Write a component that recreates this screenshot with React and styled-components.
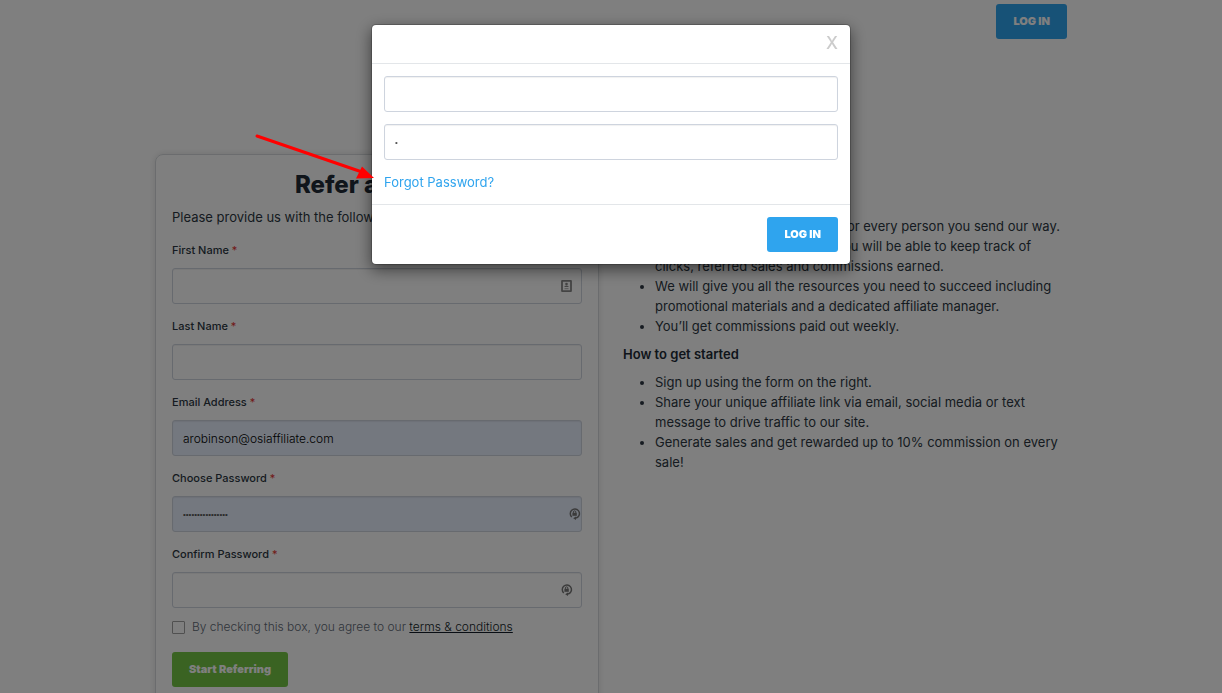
import { useState } from "react";
import styled, { createGlobalStyle } from "styled-components";

const GlobalStyle = createGlobalStyle`
  *, *::before, *::after {
    box-sizing: border-box;
  }

  body {
    margin: 0;
    background: #fff;
    color: #2c3742;
    font-family: Inter, "Open Sans", sans-serif;
    font-size: 13px;
    font-weight: 400;
    line-height: 20px;
    overflow: hidden;
  }

  input, button {
    font-family: inherit;
  }
`;

const Container = styled.div`
  max-width: 944px;
  margin: 0 auto;
  padding: 0 16px;
`;

const Header = styled.header`
  display: flex;
  justify-content: flex-end;
  padding: 4px 0;
  margin-bottom: 111px;
`;

const Button = styled.button`
  padding: 10px 17px;
  border: 0;
  border-radius: 3px;
  background: ${({ $green }) => ($green ? "#74c644" : "#2fa4ee")};
  color: #fff;
  font-size: 11px;
  font-weight: 900;
  line-height: 15px;
  cursor: pointer;
`;

const Columns = styled.main`
  display: grid;
  grid-template-columns: 1fr 1fr;
  gap: 24px;
`;

const Card = styled.section`
  padding: 16px;
  border: 1px solid #d6d9dc;
  border-radius: 8px;
  box-shadow: 0 0 6px rgba(0, 0, 0, 0.12);

  h1 {
    margin: 0 0 8px;
    color: #212b36;
    font-size: 24px;
    font-weight: 800;
    line-height: 28px;
    text-align: center;
  }

  p {
    margin: 0 0 13px;
  }
`;

const Field = styled.div`
  margin-bottom: 12px;

  label {
    display: block;
    margin-bottom: 8px;
    font-size: 11px;
    font-weight: 500;
  }

  label span {
    color: #e3342f;
    font-weight: 400;
  }
`;

const InputWrap = styled.div`
  position: relative;

  svg {
    position: absolute;
    top: 12px;
    right: ${({ $edge }) => ($edge ? "1px" : "9px")};
  }
`;

const Input = styled.input`
  display: block;
  width: 100%;
  height: 36px;
  padding: 0 10px;
  border: 1px solid #ced4de;
  border-radius: 3px;
  background: ${({ $filled }) => ($filled ? "#e8f0fe" : "#fff")};
  box-shadow: inset 0 1px 1px rgba(0, 0, 0, 0.06);
  color: #000;
  font-size: 12px;
  font-weight: 300;
  outline: 0;

  &[type="password"] {
    color: #555;
    font-family: "Liberation Sans", sans-serif;
    font-size: 8px;
  }
`;

const Terms = styled.div`
  display: flex;
  align-items: center;
  gap: 7px;
  margin-bottom: 18px;
  color: #5f6a76;
  font-size: 12px;
  font-weight: 300;
  line-height: 14px;

  input {
    appearance: none;
    width: 13px;
    height: 13px;
    margin: 0;
    border: 1px solid #a0a0a0;
    border-radius: 1px;
  }

  a {
    color: #111b26;
  }
`;

const Info = styled.section`
  padding-top: 34px;

  h2 {
    margin: 0 0 8px;
    color: #212b36;
    font-size: 13px;
    font-weight: 600;
    line-height: 20px;
  }

  ul {
    margin: 0 0 8px;
    padding-left: 32px;
  }
`;

const Backdrop = styled.div`
  position: fixed;
  inset: 0;
  display: flex;
  justify-content: center;
  align-items: flex-start;
  padding: 24px 16px;
  background: rgba(0, 0, 0, 0.5);
`;

const Modal = styled.div`
  position: relative;
  width: 100%;
  max-width: 480px;
  border: 1px solid rgba(0, 0, 0, 0.2);
  border-radius: 5px;
  background: #fff;
  background-clip: padding-box;
  box-shadow: 0 5px 15px rgba(0, 0, 0, 0.5);
`;

const ModalHeader = styled.div`
  display: flex;
  justify-content: flex-end;
  padding: 8px 12px 10px;
  border-bottom: 1px solid #e3e6e9;
`;

const CloseButton = styled.button`
  padding: 0;
  border: 0;
  background: none;
  color: #ccc;
  font-size: 17px;
  font-weight: 500;
  line-height: 20px;
  cursor: pointer;
`;

const ModalBody = styled.div`
  display: flex;
  flex-direction: column;
  align-items: flex-start;
  gap: 12px;
  padding: 12px;

  a {
    color: #2fa4ee;
    text-decoration: none;
  }
`;

const ModalFooter = styled.div`
  display: flex;
  justify-content: flex-end;
  padding: 12px;
  border-top: 1px solid #e3e6e9;
`;

const Arrow = styled.svg`
  position: absolute;
  top: 108px;
  left: -118px;
  pointer-events: none;
`;

const ContactIcon = () => (
  <svg width="12" height="12" viewBox="0 0 12 12" fill="none">
    <rect x="1" y="0.75" width="9" height="10.5" rx="0.5" stroke="#888" strokeWidth="1.8" />
    <circle cx="5.5" cy="4" r="1.3" fill="#888" />
    <path d="M3.5 7V6.2Q5.5 4.6 7.5 6.2V7z" fill="#888" />
    <path d="M3.5 8.7h4" stroke="#aaa" />
  </svg>
);

const LockIcon = () => (
  <svg width="12" height="12" viewBox="0 0 12 12" fill="none">
    <path d="M2.8 9A4.6 4.6 0 1 1 8.6 9.3L6 10.4" stroke="#777" strokeWidth="1.5" />
    <path d="M4.2 10.3L7 8.4V12z" fill="#777" />
    <rect x="3.4" y="4.8" width="4.4" height="3" fill="#777" />
    <path d="M4.4 5V4a1.2 1.2 0 0 1 2.4 0v1" stroke="#777" />
  </svg>
);

const fields = [
  { id: "first", label: "First Name", type: "text", icon: <ContactIcon /> },
  { id: "last", label: "Last Name", type: "text" },
  { id: "email", label: "Email Address", type: "email", value: "arobinson@osiaffiliate.com" },
  { id: "password", label: "Choose Password", type: "password", value: "referafriend2020", icon: <LockIcon />, edge: true },
  { id: "confirm", label: "Confirm Password", type: "password", icon: <LockIcon /> },
];

const LoginModal = ({ onClose }) => (
  <Backdrop>
    <Modal role="dialog" aria-modal="true" aria-label="Log in">
      <ModalHeader>
        <CloseButton type="button" aria-label="Close" onClick={onClose}>
          X
        </CloseButton>
      </ModalHeader>
      <ModalBody>
        <Input type="text" aria-label="Email" />
        <Input type="password" aria-label="Password" defaultValue="a" />
        <a href="#forgot">Forgot Password?</a>
      </ModalBody>
      <ModalFooter>
        <Button type="button">LOG IN</Button>
      </ModalFooter>
      <Arrow width="124" height="50" viewBox="0 0 124 50">
        <path d="M3 3L108 39" stroke="#f00" strokeWidth="3" strokeLinecap="round" />
        <path d="M120 45L102 45.5L108 33.5z" fill="#f00" />
      </Arrow>
    </Modal>
  </Backdrop>
);

const App = () => {
  const [open, setOpen] = useState(true);

  return (
    <>
      <GlobalStyle />
      <Container>
        <Header>
          <Button type="button" onClick={() => setOpen(true)}>
            LOG IN
          </Button>
        </Header>

        <Columns>
          <Card>
            <h1>Refer a Friend</h1>
            <p>Please provide us with the following information.</p>
            <form>
              {fields.map(({ id, label, type, value, icon, edge }) => (
                <Field key={id}>
                  <label htmlFor={id}>
                    {label} <span>*</span>
                  </label>
                  <InputWrap $edge={edge}>
                    <Input id={id} type={type} defaultValue={value} $filled={!!value} />
                    {icon}
                  </InputWrap>
                </Field>
              ))}
              <Terms>
                <input type="checkbox" id="terms" />
                <label htmlFor="terms">
                  By checking this box, you agree to our <a href="#terms">terms &amp; conditions</a>
                </label>
              </Terms>
              <Button type="button" $green>
                Start Referring
              </Button>
            </form>
          </Card>

          <Info>
            <h2>Why join our program</h2>
            <ul>
              <li>You will receive a commission for every person you send our way.</li>
              <li>
                Get your own account where you will be able to keep track of clicks, referred sales
                and commissions earned.
              </li>
              <li>
                We will give you all the resources you need to succeed including promotional
                materials and a dedicated affiliate manager.
              </li>
              <li>You’ll get commissions paid out weekly.</li>
            </ul>
            <h2>How to get started</h2>
            <ul>
              <li>Sign up using the form on the right.</li>
              <li>
                Share your unique affiliate link via email, social media or text message to drive
                traffic to our site.
              </li>
              <li>Generate sales and get rewarded up to 10% commission on every sale!</li>
            </ul>
          </Info>
        </Columns>
      </Container>
      {open && <LoginModal onClose={() => setOpen(false)} />}
    </>
  );
};

export default App;
